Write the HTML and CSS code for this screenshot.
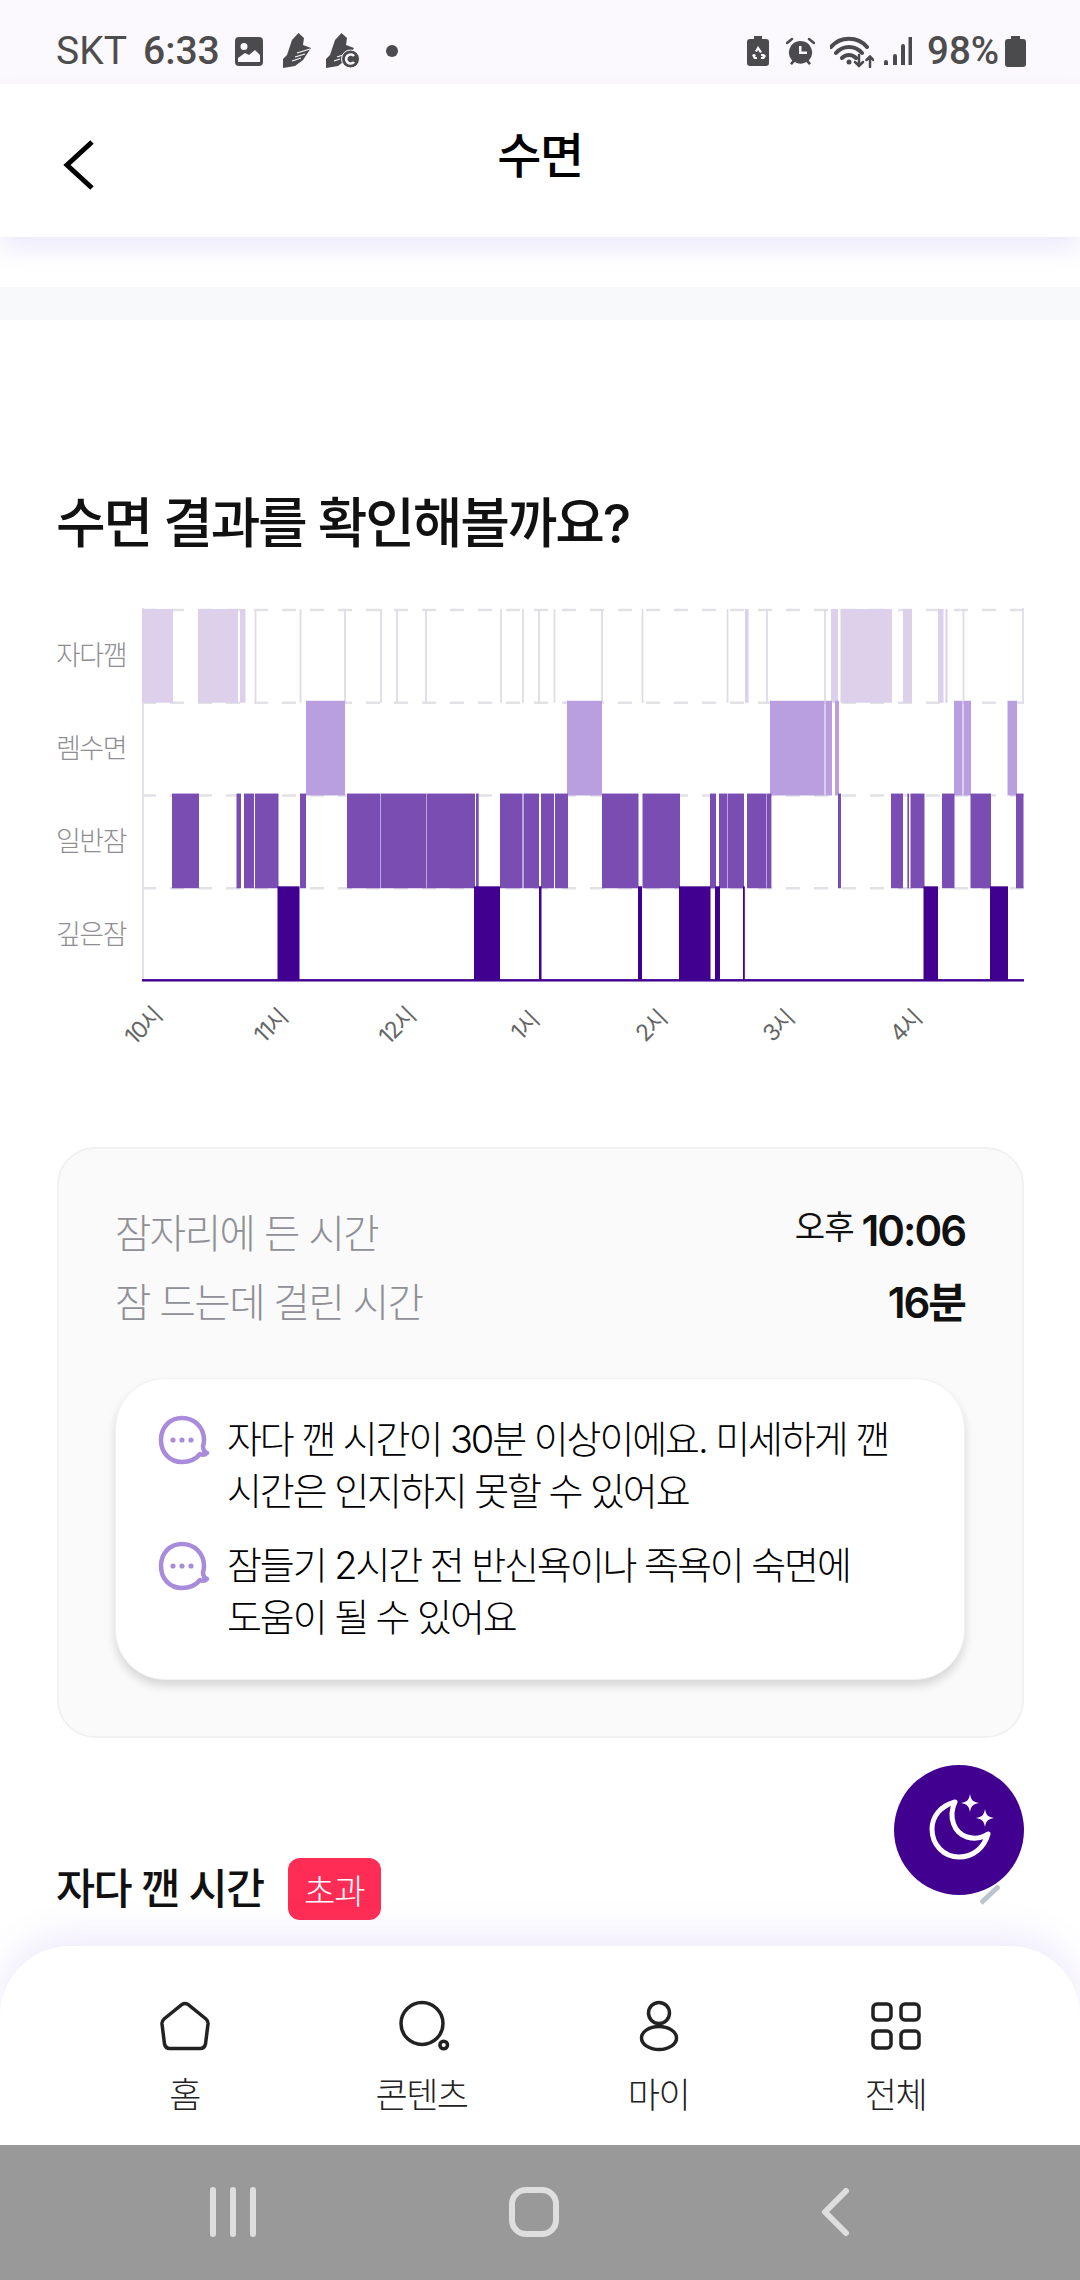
FILE: index.html
```html
<!DOCTYPE html>
<html lang="ko">
<head>
<meta charset="utf-8">
<title>수면</title>
<link rel="stylesheet" href="styles.css">
</head>
<body>
<div class="phone">
  <div class="status">
    <span class="carrier">SKT</span>
    <span class="clock">6:33</span>
    <svg class="si pic" viewBox="0 0 28 29"><path class="ink" fill-rule="evenodd" d="M4 0h20a4 4 0 0 1 4 4v21a4 4 0 0 1-4 4H4a4 4 0 0 1-4-4V4a4 4 0 0 1 4-4zM9 6a3.500 3.500 0 1 0 0 7 3.500 3.500 0 0 0 0-7zM3 25h22v-7l-5-5-6 5-4-2-7 5z"/></svg>
    <svg class="si shoe1" viewBox="0 0 30 36"><path class="ink" d="M15.500 0L21 5l-1 7 8 3-8 12-8 6-12 2v-9l4-4 2-6 3-9z"/><path class="cut" d="M14 20l13-4M12 24l10-3M9 28l9-3"/></svg>
    <svg class="si shoe2" viewBox="0 0 34 36"><path class="ink" d="M15.500 0L21 5l-1 7 8 3-8 12-8 6-12 2v-9l4-4 2-6 3-9z"/><path class="cut" d="M11 24l6-2M8 28l6-2"/><circle class="ink halo" cx="24.500" cy="26" r="9"/><path class="cut thick-cut" d="M28 23a4.500 4.500 0 1 0 0 6"/></svg>
    <span class="sdot"></span>
    <span class="spacer"></span>
    <svg class="si brec" viewBox="0 0 22 30"><path class="ink" fill-rule="evenodd" d="M7 0h8v3h4a3 3 0 0 1 3 3v21a3 3 0 0 1-3 3H3a3 3 0 0 1-3-3V6a3 3 0 0 1 3-3h4zM11 10l-3 5 2 1 1-2 2 3 2-1zM5 19l2 4h3v-2H8l1-2-2-1zM17 18l-3 0v2h2l-1 1h-1v2h3l2-3z"/></svg>
    <svg class="si alarm" viewBox="0 0 29 28"><path class="ink" fill-rule="evenodd" d="M14.500 4a11.500 11.500 0 0 1 8.300 19.500l2.200 3-2 1.500-2.600-3a11.500 11.500 0 0 1-11.800 0L6 28l-2-1.500 2.200-3A11.500 11.500 0 0 1 14.500 4zM13 9v8h8v-2.500h-5.500V9z"/><path class="line" d="M1 6l5-4M28 6l-5-4"/></svg>
    <svg class="si wifi" viewBox="0 0 44 33"><path class="line thick" d="M1 12C10 1 28 1 37 12M6 18C13 10 25 10 32 18M12 23C16 19 22 19 26 23"/><circle class="ink" cx="19" cy="27" r="2.500"/><path class="line" d="M29 20v11M25 27l4 4 4-4M40 32V22M36.500 25l3.500-3.500 3.500 3.500"/></svg>
    <svg class="si signal" viewBox="0 0 28 28"><path class="line thick" d="M2 28v-3M11 28v-9M19 28V9M26.500 28V0"/></svg>
    <span class="pct">98%</span>
    <svg class="si batt" viewBox="0 0 21 31"><path class="ink" d="M6 0h9v3h3a3 3 0 0 1 3 3v22a3 3 0 0 1-3 3H3a3 3 0 0 1-3-3V6a3 3 0 0 1 3-3h3z"/></svg>
  </div>

  <header class="topbar">
    <svg class="back" viewBox="0 0 32 50"><path d="M29 2L4 25l25 23" /></svg>
    <h1 class="page-title">수면</h1>
  </header>

  <main class="content">
    <div class="band"></div>
    <h2 class="result-title">수면 결과를 확인해볼까요?</h2>

    <section class="chart">
      <div class="ylabels">
        <span>자다깸</span><span>렘수면</span><span>일반잠</span><span>깊은잠</span>
      </div>
      <svg class="plot" viewBox="142 608 882 387" preserveAspectRatio="none">
        <g class="grid">
          <path d="M142 610H1024M142 706H1024M142 802H1024M142 898H1024"/>
        </g>
        <path class="axis" d="M143 608V994M1023 608V706"/>
        <g class="ticks">
          <path d="M255.500 609v97M300.500 609v97M345 609v97M381 609v97M397 609v97M426 609v97M501 609v97M523 609v97M539 609v97M554.500 609v97M602 609v97M642.500 609v97M727.500 609v97M767 609v97M825 609v97M963.500 609v97"/>
        </g>
        <g class="awake">
          <rect x="142" y="609" width="31" height="97"/><rect x="198" y="609" width="40" height="97"/><rect x="240" y="609" width="5.500" height="97"/><rect x="745" y="609" width="3.500" height="97"/><rect x="831" y="609" width="7" height="97"/><rect x="840.500" y="609" width="51.500" height="97"/><rect x="903" y="609" width="9" height="97"/><rect x="938" y="609" width="5.500" height="97"/><rect x="945.500" y="609" width="2" height="97"/>
        </g>
        <g class="rem">
          <rect x="306" y="704" width="39" height="98"/><rect x="567" y="704" width="35" height="98"/><rect x="770" y="704" width="54.500" height="98"/><rect x="825.500" y="704" width="6.500" height="98"/><rect x="835" y="704" width="4" height="98"/><rect x="954" y="704" width="8.500" height="98"/><rect x="963.500" y="704" width="7.500" height="98"/><rect x="1007.500" y="704" width="9.500" height="98"/>
        </g>
        <g class="light">
          <rect x="172" y="800" width="27" height="98"/><rect x="236.500" y="800" width="4.500" height="98"/><rect x="244" y="800" width="10" height="98"/><rect x="255" y="800" width="23.500" height="98"/><rect x="300" y="800" width="6" height="98"/><rect x="347" y="800" width="33" height="98"/><rect x="380.500" y="800" width="45.500" height="98"/><rect x="426.500" y="800" width="48.500" height="98"/><rect x="476" y="800" width="2.700" height="98"/><rect x="500" y="800" width="22.500" height="98"/><rect x="523.500" y="800" width="15.500" height="98"/><rect x="541" y="800" width="13" height="98"/><rect x="555" y="800" width="13" height="98"/><rect x="602" y="800" width="36.500" height="98"/><rect x="642.500" y="800" width="37.500" height="98"/><rect x="710" y="800" width="6" height="98"/><rect x="719" y="800" width="8.500" height="98"/><rect x="728" y="800" width="16" height="98"/><rect x="747" y="800" width="19.500" height="98"/><rect x="767" y="800" width="4.400" height="98"/><rect x="838" y="800" width="3" height="98"/><rect x="891" y="800" width="12" height="98"/><rect x="907.400" y="800" width="1.600" height="98"/><rect x="910.500" y="800" width="14" height="98"/><rect x="942" y="800" width="12.500" height="98"/><rect x="970.500" y="800" width="20.500" height="98"/><rect x="1016" y="800" width="7.500" height="98"/>
        </g>
        <g class="deep">
          <rect x="277.500" y="896" width="22" height="98"/><rect x="474" y="896" width="26" height="98"/><rect x="539" y="896" width="2.500" height="98"/><rect x="638" y="896" width="4" height="98"/><rect x="679" y="896" width="31.500" height="98"/><rect x="715" y="896" width="5" height="98"/><rect x="743" y="896" width="1.800" height="98"/><rect x="923.500" y="896" width="14.500" height="98"/><rect x="990" y="896" width="18" height="98"/>
          <rect x="142" y="992" width="882" height="2.500"/>
        </g>
      </svg>
      <div class="xlabels">
        <span>10시</span><span>11시</span><span>12시</span><span>1시</span><span>2시</span><span>3시</span><span>4시</span>
      </div>
    </section>

    <section class="summary">
      <div class="row"><span class="row-name">잠자리에 든 시간</span><span class="row-val"><small>오후</small>10:06</span></div>
      <div class="row"><span class="row-name">잠 드는데 걸린 시간</span><span class="row-val">16분</span></div>
      <div class="tips">
        <div class="tip">
          <svg class="bubble" viewBox="0 0 52 50"><path d="M24 3C12 3 3 12 3 25s9 22 21 22c8 0 14-3 18-8 2 1 5 1 7-1-3-1-4-4-4-7 1-2 1-4 1-6C46 12 36 3 24 3z"/><circle cx="15" cy="25" r="2.600"/><circle cx="24" cy="25" r="2.600"/><circle cx="33" cy="25" r="2.600"/></svg>
          <p>자다 깬 시간이 30분 이상이에요. 미세하게 깬<br>시간은 인지하지 못할 수 있어요</p>
        </div>
        <div class="tip">
          <svg class="bubble" viewBox="0 0 52 50"><path d="M24 3C12 3 3 12 3 25s9 22 21 22c8 0 14-3 18-8 2 1 5 1 7-1-3-1-4-4-4-7 1-2 1-4 1-6C46 12 36 3 24 3z"/><circle cx="15" cy="25" r="2.600"/><circle cx="24" cy="25" r="2.600"/><circle cx="33" cy="25" r="2.600"/></svg>
          <p>잠들기 2시간 전 반신욕이나 족욕이 숙면에<br>도움이 될 수 있어요</p>
        </div>
      </div>
    </section>

    <div class="wake-head">
      <h3>자다 깬 시간</h3>
      <span class="badge">초과</span>
    </div>
  </main>

  <svg class="pencil" viewBox="0 0 20 20"><path d="M19 1L1 18"/></svg>
  <button class="fab" aria-label="수면">
    <svg viewBox="0 0 130 130">
      <path class="moon" d="M61 37C46 41 38 52 38 64c0 16 12 28 27 28 14 0 25-9 29-23-6 4-14 5-21 3C60 68 54 52 61 37z"/>
      <path class="star" d="M76 29c1 6 3 8 9 9-6 1-8 3-9 9-1-6-3-8-9-9 6-1 8-3 9-9zM91 44c1 6 3 8 9 9-6 1-8 3-9 9-1-6-3-8-9-9 6-1 8-3 9-9z"/>
    </svg>
  </button>

  <nav class="tabs">
    <div class="tab">
      <svg viewBox="0 0 54 52"><path d="M24 4.500Q27 2.500 30 4.500L48 19Q50.300 21 50 24L47.500 44Q46.500 48.500 42 48.500H12Q7.500 48.500 6.500 44L4 24Q3.700 21 6 19Z"/></svg>
      <span>홈</span>
    </div>
    <div class="tab">
      <svg viewBox="0 0 54 52"><circle cx="27" cy="23.500" r="21"/><circle cx="48.700" cy="45" r="3.800"/></svg>
      <span>콘텐츠</span>
    </div>
    <div class="tab">
      <svg viewBox="0 0 54 52"><circle cx="27" cy="13" r="10.500"/><ellipse cx="27" cy="38" rx="17.500" ry="11.500"/></svg>
      <span>마이</span>
    </div>
    <div class="tab">
      <svg viewBox="0 0 54 52"><rect x="4" y="4" width="18" height="16" rx="4"/><rect x="32" y="4" width="18" height="16" rx="4"/><rect x="4" y="31" width="18" height="17" rx="4"/><rect x="32" y="31" width="18" height="17" rx="4"/></svg>
      <span>전체</span>
    </div>
  </nav>

  <footer class="sysnav">
    <svg class="sys recents" viewBox="0 0 46 50"><path d="M3 3v44M23 3v44M43 3v44"/></svg>
    <svg class="sys homeb" viewBox="0 0 50 50"><rect x="3" y="3" width="44" height="44" rx="14"/></svg>
    <svg class="sys backb" viewBox="0 0 30 48"><path d="M26 3L5 24l21 21"/></svg>
  </footer>
</div>
</body>
</html>
```

FILE: styles.css
```css
* { box-sizing: border-box; }
html, body { margin: 0; padding: 0; background: #fff; }
body {
  font-family: "Inter", "Noto Sans CJK KR", sans-serif;
  color: #111;
}
.phone {
  position: relative;
  width: 1080px;
  height: 2280px;
  overflow: hidden;
  display: flex;
  flex-direction: column;
  background: #fff;
}

/* status bar */
.status {
  height: 84px;
  flex: none;
  background: #fbf9fd;
  display: flex;
  align-items: center;
  padding: 18px 54px 0 56px;
  color: #4d4d4d;
  font-family: "Roboto", sans-serif;
  font-size: 39px;
  line-height: 1;
}
.carrier { width: 87px; }
.clock { width: 92px; font-weight: 500; }
.si { flex: none; display: block; }
.ink { fill: #4b4b4d; }
.cut { fill: none; stroke: #fbf9fd; stroke-width: 1.300; }
.thick-cut { stroke-width: 2.600; }
.halo { stroke: #fbf9fd; stroke-width: 1; }
.line { fill: none; stroke: #4b4b4d; stroke-width: 2.500; stroke-linecap: round; }
.line.thick { stroke-width: 4; stroke-linecap: round; }
.pic { width: 28px; height: 29px; margin-right: 20px; }
.shoe1 { width: 30px; height: 36px; margin-right: 13px; }
.shoe2 { width: 34px; height: 36px; margin-right: 26px; }
.sdot { width: 12px; height: 12px; border-radius: 50%; background: #4b4b4d; }
.spacer { flex: 1; }
.brec { width: 22px; height: 30px; margin-right: 17px; }
.alarm { width: 29px; height: 28px; margin-right: 15px; }
.wifi { width: 44px; height: 33px; margin-right: 10px; }
.signal { width: 28px; height: 28px; margin-right: 15px; }
.pct { width: 72px; margin-right: 6px; font-weight: 500; font-size: 38.500px; }
.batt { width: 21px; height: 31px; }

/* header */
.topbar {
  position: relative;
  z-index: 2;
  flex: none;
  height: 153px;
  background: #fff;
  display: flex;
  align-items: center;
  justify-content: center;
  box-shadow: 0 12px 24px rgba(110, 80, 220, .12);
}
.back {
  position: absolute;
  left: 63px;
  top: 56px;
  width: 32px;
  height: 50px;
}
.back path { fill: none; stroke: #000; stroke-width: 5; }
.page-title {
  margin: 0 0 10px;
  font-size: 48px;
  font-weight: 500;
  letter-spacing: -1.500px;
  line-height: 1;
  color: #000;
}

/* content */
.content {
  flex: 1;
  min-height: 0;
  overflow: hidden;
  padding-top: 50px;
}
.band { height: 33px; background: #f8f9fa; }
.result-title {
  margin: 174px 0 0 56px;
  font-size: 54px;
  line-height: 60px;
  font-weight: 500;
  letter-spacing: -2.200px;
  color: #111;
}

/* chart */
.chart {
  margin: 54px 56px 0 56px;
  display: grid;
  grid-template-columns: 86px 882px;
  grid-template-rows: 374px auto;
}
.ylabels {
  display: grid;
  grid-template-rows: repeat(4, 93px);
  align-content: start;
  color: #8e8e93;
  font-size: 27px;
  letter-spacing: -1.500px;
  line-height: 96px;
  font-weight: 300;
}
.plot { display: block; width: 882px; height: 374px; }
.grid path { fill: none; stroke: #e2e1e6; stroke-width: 2.500; stroke-dasharray: 14 14; }
.axis { fill: none; stroke: #e2e0ec; stroke-width: 2; }
.ticks path { fill: none; stroke: #dfdcea; stroke-width: 1.800; }
.awake rect { fill: #dcd0eb; }
.rem rect { fill: #b99fe0; }
.light rect { fill: #7a4db3; }
.deep rect { fill: #41008f; }
.xlabels {
  grid-column: 1 / 3;
  margin: 9px 0 0 24px;
  display: grid;
  grid-template-columns: repeat(7, 127px);
  justify-items: center;
  color: #666;
  font-size: 23px;
  line-height: 70px;
  letter-spacing: -1.500px;
  font-weight: 400;
}
.xlabels span { display: block; transform: rotate(-45deg); }

/* summary */
.summary {
  margin: 86px 56px 0 57px;
  height: 591px;
  border: 2px solid #f1f1f3;
  border-radius: 38px;
  background: #fafafa;
  padding: 47px 57px 0 56px;
}
.row {
  display: flex;
  justify-content: space-between;
  align-items: center;
  height: 69px;
}
.row-name {
  font-size: 39.500px;
  font-weight: 300;
  letter-spacing: -1.500px;
  color: #8f8f96;
}
.row-val {
  font-size: 42px;
  font-weight: 600;
  letter-spacing: -2px;
  color: #111;
  display: flex;
  align-items: flex-start;
}
.row-val small {
  font-size: 33px;
  font-weight: 400;
  margin: -4px 8px 0 0;
  letter-spacing: -1px;
}
.tips {
  margin-top: 44px;
  height: 302px;
  background: #fff;
  border: 1px solid #f2f2f4;
  border-radius: 50px;
  box-shadow: 0 6px 10px rgba(0, 0, 0, .14);
  padding: 34px 40px 0 42px;
}
.tip { display: flex; align-items: flex-start; margin-bottom: 22px; }
.bubble { width: 52px; height: 50px; flex: none; margin: 2px 17px 0 0; }
.bubble path { fill: none; stroke: #a98bdc; stroke-width: 4.500; stroke-linejoin: round; }
.bubble circle { fill: #a98bdc; }
.tip p {
  margin: 0;
  font-size: 38px;
  line-height: 52px;
  font-weight: 300;
  letter-spacing: -2.100px;
  color: #000;
}

/* wake section */
.wake-head {
  margin: 120px 0 0 56px;
  display: flex;
  align-items: center;
  gap: 24px;
}
.wake-head h3 {
  margin: 0;
  font-size: 42.500px;
  line-height: 62px;
  font-weight: 500;
  letter-spacing: -1.500px;
  color: #111;
}
.badge {
  width: 93px;
  height: 62px;
  border-radius: 12px;
  background: #ff2d55;
  color: #fff;
  font-size: 34px;
  font-weight: 300;
  letter-spacing: -1px;
  display: flex;
  align-items: center;
  justify-content: center;
}

/* floating */
.fab {
  position: absolute;
  left: 894px;
  top: 1765px;
  width: 130px;
  height: 130px;
  padding: 0;
  border: 0;
  border-radius: 50%;
  background: #41008f;
}
.fab svg { display: block; width: 130px; height: 130px; }
.moon { fill: none; stroke: #fff; stroke-width: 5; stroke-linejoin: round; }
.star { fill: #fff; }
.pencil {
  position: absolute;
  left: 980px;
  top: 1885px;
  width: 20px;
  height: 20px;
}
.pencil path { fill: none; stroke: #bcc4cf; stroke-width: 5; }

/* tabs */
.tabs {
  position: relative;
  flex: none;
  height: 199px;
  background: #fff;
  border-radius: 70px 70px 0 0;
  box-shadow: 0 -12px 36px rgba(122, 92, 220, .12);
  display: grid;
  grid-template-columns: repeat(4, 237px);
  justify-content: center;
  padding-top: 54px;
  margin-top: 0;
}
.tab {
  display: flex;
  flex-direction: column;
  align-items: center;
}
.tab svg { width: 54px; height: 52px; overflow: visible; }
.tab svg * { fill: none; stroke: #222; stroke-width: 3.500; }
.tab span {
  margin-top: 21px;
  font-size: 35px;
  line-height: 44px;
  font-weight: 300;
  letter-spacing: -1.500px;
  color: #222;
}

/* system nav */
.sysnav {
  flex: none;
  height: 135px;
  background: #9a999a;
  position: relative;
  display: grid;
  grid-template-columns: 280px 283px 1fr;
  align-items: center;
  padding: 0 0 1px 210px;
}
.sys * { fill: none; stroke: #dedede; stroke-width: 6; stroke-linecap: round; stroke-linejoin: round; }
.recents { width: 46px; height: 50px; }
.homeb { width: 50px; height: 50px; margin-left: 19px; }
.backb { width: 30px; height: 48px; margin-left: 47px; }
```
